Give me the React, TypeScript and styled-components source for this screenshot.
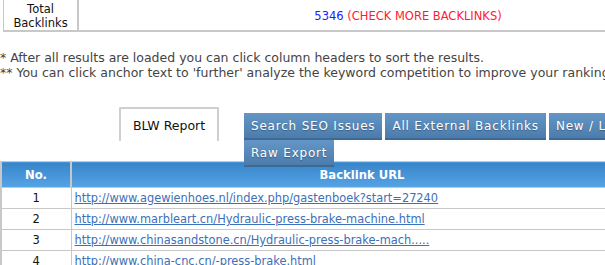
import styled, { createGlobalStyle } from "styled-components";

const GlobalStyle = createGlobalStyle`
  html, body {
    margin: 0;
    padding: 0;
    background: #fff;
    overflow: hidden;
  }
  body {
    font-family: "DejaVu Sans", Verdana, sans-serif;
    font-size: 12px;
  }
`;

const rows = [
  "http://www.agewienhoes.nl/index.php/gastenboek?start=27240",
  "http://www.marbleart.cn/Hydraulic-press-brake-machine.html",
  "http://www.chinasandstone.cn/Hydraulic-press-brake-mach.....",
  "http://www.china-cnc.cn/-press-brake.html",
];

const buttons = [
  "Search SEO Issues",
  "All External Backlinks",
  "New / Lost Backlinks",
  "Raw Export",
];

export default function App() {
  return (
    <Page>
      <GlobalStyle />
      <SummaryTable>
        <tbody>
          <tr>
            <LabelCell>
              Total
              <br />
              Backlinks
            </LabelCell>
            <ValueCell>
              <Count>5346</Count> <CheckMore>(CHECK MORE BACKLINKS)</CheckMore>
            </ValueCell>
          </tr>
        </tbody>
      </SummaryTable>

      <Notes>
        <p>* After all results are loaded you can click column headers to sort the results.</p>
        <p>
          ** You can click anchor text to 'further' analyze the keyword competition to improve your rankings.
        </p>
      </Notes>

      <TabBar>
        <Tab>BLW Report</Tab>
        <ButtonGroup>
          {buttons.map((b) => (
            <ActionButton key={b}>{b}</ActionButton>
          ))}
        </ButtonGroup>
      </TabBar>

      <ResultTable>
        <thead>
          <tr>
            <HeadCell $width={68}>No.</HeadCell>
            <HeadCell>Backlink URL</HeadCell>
          </tr>
        </thead>
        <tbody>
          {rows.map((url, i) => (
            <tr key={url}>
              <NumCell>{i + 1}</NumCell>
              <UrlCell>
                <UrlLink href="#">{url}</UrlLink>
              </UrlCell>
            </tr>
          ))}
        </tbody>
      </ResultTable>
    </Page>
  );
}

const Page = styled.div`
  width: 760px;
`;

const SummaryTable = styled.table`
  margin-left: 3px;
  width: 734px;
  border-collapse: collapse;
  border-left: 1px solid #c8c8c8;
  border-bottom: 2px solid #c8c8c8;
`;

const LabelCell = styled.td`
  width: 73px;
  height: 27px;
  padding: 2px 0 0;
  text-align: center;
  line-height: 14px;
  font-size: 11.5px;
  color: #111;
  border-right: 2px solid #c8c8c8;
`;

const ValueCell = styled.td`
  text-align: center;
  padding: 2px 0 0;
  font-size: 11.5px;
`;

const Count = styled.span`
  color: #1a1aff;
`;

const CheckMore = styled.span`
  color: #ff1a33;
`;

const Notes = styled.div`
  margin-top: 18px;
  color: #444;
  font-size: 12.5px;
  white-space: nowrap;

  p {
    margin: 0;
    line-height: 15px;
  }
`;

const TabBar = styled.div`
  display: flex;
  align-items: flex-start;
  margin-top: 27px;
  padding-left: 119px;
`;

const Tab = styled.div`
  width: 96px;
  height: 32px;
  border: 2px solid #cfcfcf;
  border-bottom: none;
  border-radius: 2px 2px 0 0;
  display: flex;
  align-items: center;
  justify-content: center;
  color: #111;
  font-size: 12.5px;
`;

const ButtonGroup = styled.div`
  position: relative;
  z-index: 1;
  display: flex;
  flex-wrap: wrap;
  column-gap: 3px;
  width: 480px;
  margin-left: 25px;
  margin-top: 6px;
`;

const ActionButton = styled.button`
  height: 27px;
  padding: 0 7px;
  border: none;
  border-bottom: 2px solid #3e6992;
  background: linear-gradient(#6396c6, #4c7cab);
  color: #fff;
  font-family: "DejaVu Sans", Verdana, sans-serif;
  font-size: 12px;
  letter-spacing: 0.8px;
  text-shadow: 0 1px 1px rgba(0, 0, 0, 0.3);
  cursor: pointer;
`;

const ResultTable = styled.table`
  width: 653px;
  border-collapse: collapse;
  margin-top: -6px;
`;

const HeadCell = styled.th<{ $width?: number }>`
  width: ${(p) => (p.$width ? `${p.$width}px` : "auto")};
  height: 25px;
  padding: 0;
  color: #fff;
  font-size: 11.6px;
  background: linear-gradient(#3784ca, #56a4e4);
  border: 1px solid #c8c8c8;
  border-left-width: 2px;
`;

const NumCell = styled.td`
  height: 20px;
  padding: 0;
  text-align: center;
  color: #111;
  font-size: 11.5px;
  border: 1px solid #c8c8c8;
  border-left-width: 2px;
`;

const UrlCell = styled.td`
  padding: 0 3px;
  border: 1px solid #c8c8c8;
`;

const UrlLink = styled.a`
  color: #3c70b8;
  font-size: 11.4px;
  text-decoration: underline;
`;
